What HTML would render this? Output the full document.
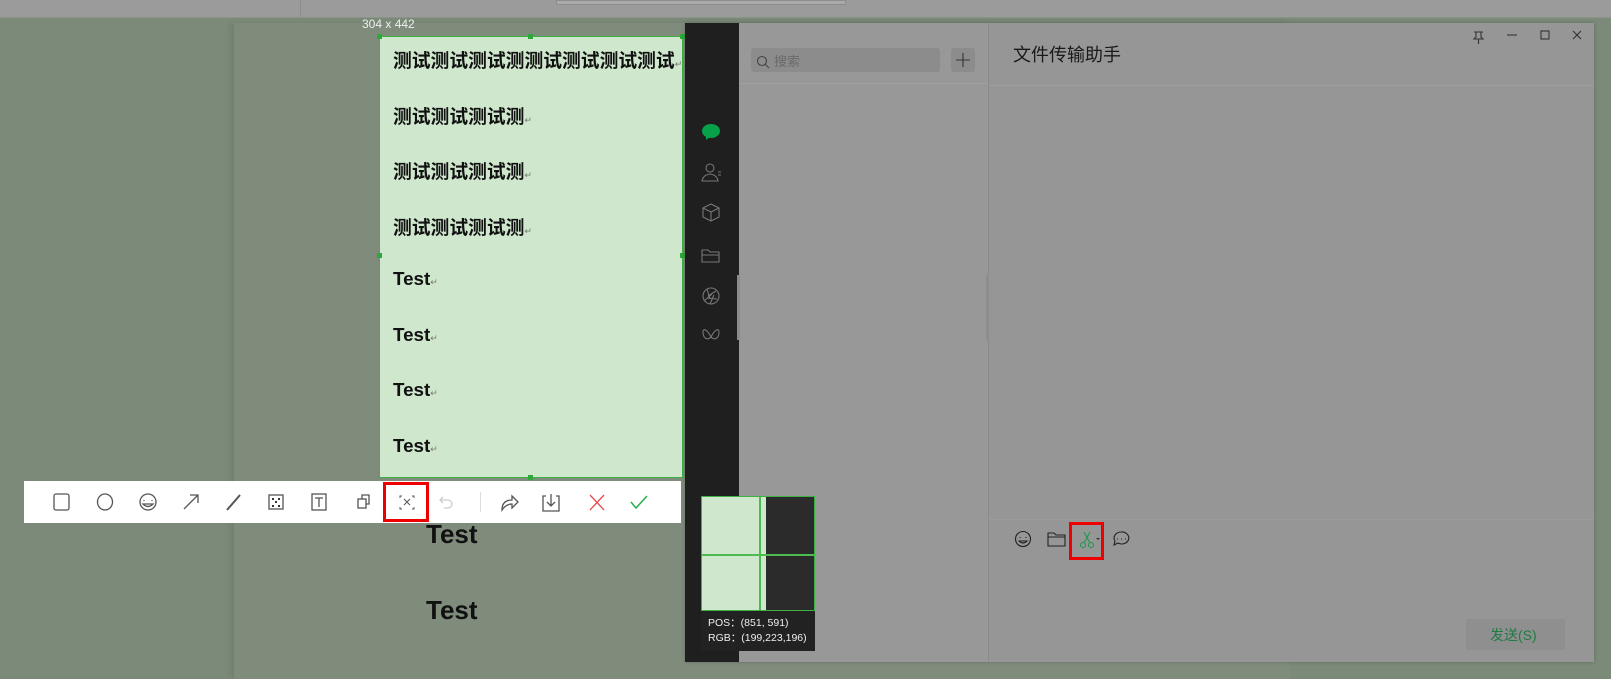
<!DOCTYPE html>
<html><head><meta charset="utf-8"><style>
*{margin:0;padding:0;box-sizing:border-box}
body{width:1611px;height:679px;overflow:hidden;background:#7b8a79;position:relative;font-family:"Liberation Sans","Noto Sans CJK SC",sans-serif}
.a{position:absolute}
svg{position:absolute;overflow:visible}
.zh{font-family:"Liberation Sans","Noto Sans CJK SC",sans-serif}
.row{position:absolute;left:393px;font-weight:bold;font-size:18.8px;color:#111;white-space:nowrap}
.ret{font-size:9px;color:#777;font-weight:normal}
</style></head><body>
<div class="a" style="left:0;top:0;width:1611px;height:18px;background:#9b9b9b;border-bottom:1px solid #8a9487"></div>
<div class="a" style="left:300px;top:0;width:1px;height:17px;background:#8d8d8d"></div>
<div class="a" style="left:556px;top:0;width:290px;height:5px;background:#aaa;border:1px solid #8d8d8d"></div>
<div class="a" style="left:234px;top:23px;width:1056px;height:656px;background:#7f8c7c;box-shadow:-4px 0 6px rgba(0,0,0,.08)"></div>

<!-- selection -->
<div class="a" style="left:362px;top:17px;font-size:12px;color:#eee">304 x 442</div>
<div class="a" style="left:379px;top:36px;width:304px;height:442px;background:#cfe7cc;border:1px solid #3cb043"></div>
<div class="a" style="left:377px;top:34px;width:5px;height:5px;background:#2ea83a"></div>
<div class="a" style="left:528px;top:34px;width:5px;height:5px;background:#2ea83a"></div>
<div class="a" style="left:680px;top:34px;width:5px;height:5px;background:#2ea83a"></div>
<div class="a" style="left:377px;top:253px;width:5px;height:5px;background:#2ea83a"></div>
<div class="a" style="left:680px;top:253px;width:5px;height:5px;background:#2ea83a"></div>
<div class="a" style="left:528px;top:475px;width:5px;height:5px;background:#2ea83a"></div>
<div class="row" style="top:46px">测试测试测试测测试测试测试测试<span class="ret">↵</span></div>
<div class="row" style="top:102px">测试测试测试测<span class="ret">↵</span></div>
<div class="row" style="top:157px">测试测试测试测<span class="ret">↵</span></div>
<div class="row" style="top:213px">测试测试测试测<span class="ret">↵</span></div>
<div class="row" style="top:268px">Test<span class="ret">↵</span></div>
<div class="row" style="top:324px">Test<span class="ret">↵</span></div>
<div class="row" style="top:379px">Test<span class="ret">↵</span></div>
<div class="row" style="top:435px">Test<span class="ret">↵</span></div>
<div class="a" style="left:426px;top:519px;font-size:26px;font-weight:bold;color:#111">Test</div>
<div class="a" style="left:426px;top:595px;font-size:26px;font-weight:bold;color:#111">Test</div>

<!-- toolbar -->
<div class="a" style="left:24px;top:481px;width:657px;height:42px;background:#fff"></div>
<div class="a" style="left:383px;top:482px;width:46px;height:40px;border:3px solid #e00"></div>
<div class="a" style="left:480px;top:492px;width:1px;height:20px;background:#ddd"></div>
<svg width="1611" height="679" style="left:0;top:0" fill="none" stroke="#555" stroke-width="1.3">
<rect x="54" y="494" width="15" height="16" rx="2"/>
<ellipse cx="105" cy="502" rx="7.5" ry="8"/>
<circle cx="148" cy="502" r="8"/><path d="M144 500v1M152 500v1M143 504q5 5 10 0z"/>
<path d="M184 509l14-14M190 495h8v8"/>
<path d="M227 510l13-15" stroke-width="2"/>
<rect x="269" y="495" width="14" height="14"/><path d="M272 498h2v2h-2zM278 498h2v2h-2zM275 501h2v2h-2zM272 505h2v2h-2zM278 505h2v2h-2z" fill="#333" stroke="none"/>
<rect x="312" y="494" width="14" height="16"/><path d="M315 498h8M319 498v9"/>
<rect x="358" y="499" width="8" height="9"/><path d="M362 499v-4h7v9h-3"/>
<path d="M400 498v-2h2M412 496h2v2M400 507v2h2M412 509h2v-2M404 499l6 6M410 499l-6 6" stroke-width="1"/>
<path d="M443 497l-3 3 3 3M440 500h8a4 4 0 0 1 0 8h-4" stroke="#ccc"/>
<path d="M502 510q0-10 10-10v-4l6 6-6 6v-4q-6 0-10 6z"/>
<path d="M546 496h-3v15h16v-15h-3M551 494v12M547 502l4 4 4-4"/>
<path d="M590 495l14 15M604 495l-14 15" stroke="#e84a4a"/>
<path d="M631 502l5 6 11-12" stroke="#22b14c" stroke-width="1.5"/>
</svg>

<!-- wechat window -->
<div class="a" style="left:685px;top:23px;width:909px;height:639px;background:#969696;box-shadow:0 0 4px rgba(0,0,0,.2)"></div>
<div class="a" style="left:685px;top:23px;width:54px;height:639px;background:#1f1f1f"></div>
<div class="a" style="left:739px;top:23px;width:249px;height:639px;background:#989898"></div>
<div class="a" style="left:739px;top:83px;width:249px;height:1px;background:#a0a0a0"></div>
<div class="a" style="left:737px;top:275px;width:3px;height:65px;background:#8a8a8a"></div>
<div class="a" style="left:988px;top:23px;width:1px;height:639px;background:#8a8a8a"></div>
<div class="a" style="left:986px;top:275px;width:3px;height:65px;background:#8d8d8d"></div>
<div class="a" style="left:751px;top:48px;width:189px;height:24px;background:#8c8c8c;border-radius:3px"></div>
<div class="a zh" style="left:774px;top:51px;font-size:13px;color:#6a6a6a">搜索</div>
<div class="a" style="left:951px;top:48px;width:24px;height:24px;background:#8c8c8c;border-radius:3px"></div>
<div class="a zh" style="left:1013px;top:41px;font-size:18px;color:#1a1a1a">文件传输助手</div>
<div class="a" style="left:989px;top:85px;width:605px;height:1px;background:#9e9e9e"></div>
<div class="a" style="left:989px;top:519px;width:605px;height:1px;background:#9c9c9c"></div>
<div class="a" style="left:1466px;top:619px;width:99px;height:31px;background:#8f8f8f;border-radius:2px"></div>
<div class="a zh" style="left:1490px;top:625px;font-size:14px;color:#1e7b44">发送(S)</div>
<div class="a" style="left:1069px;top:522px;width:35px;height:38px;border:3px solid #e00"></div>
<svg width="1611" height="679" style="left:0;top:0" fill="none" stroke="#222" stroke-width="1.1">
<circle cx="762" cy="61" r="4.5" stroke="#444"/><path d="M765 64l4 4" stroke="#444"/>
<path d="M963 53v14M956 60h14" stroke="#333"/>
<path d="M1474 32h9M1476 32v5l-2 2h9l-2-2v-5M1478.5 39v5" stroke="#333"/>
<path d="M1507 35h10" stroke="#333"/>
<rect x="1541" y="31" width="8" height="8" stroke="#333"/>
<path d="M1573 31l8 8M1581 31l-8 8" stroke="#333"/>
<ellipse cx="711" cy="131" rx="9" ry="7" fill="#07a14a" stroke="none"/><path d="M706 136l0 4 4-3z" fill="#07a14a" stroke="none"/>
<g stroke="#777"><circle cx="710" cy="168" r="4"/><path d="M702 181q1-6 8-7q7 1 8 7zM718 172h3M718 175h3"/>
<path d="M711 204l8 4v9l-8 4-8-4v-9zM703 208l8 4 8-4M711 212v9"/>
<path d="M702 250h6l2 2h9v10h-17zM702 255h17"/>
<circle cx="711" cy="296" r="8"/><path d="M707 289l3 10M716 291l-8 5M717 299l-9-1M710 304l4-9M704 301l8-7"/>
<path d="M711 337c-4-8-8-9-8-5 0 6 4 9 8 5c4 4 8 1 8-5 0-4-4-3-8 5z"/></g>
<g stroke="#222"><circle cx="1023" cy="539" r="7.5"/><path d="M1020 537v1M1026 537v1M1019 541q4 4 8 0z"/>
<path d="M1048 533h6l2 2h9v11h-17zM1048 537h17"/></g>
<g stroke="#1c9a4e"><circle cx="1083" cy="545" r="2.5"/><circle cx="1091" cy="545" r="2.5"/><path d="M1084 543l6-11M1090 543l-6-11"/></g>
<path d="M1096 538l2 2 2-2z" fill="#333" stroke="none"/>
<path d="M1121 532a7 6 0 1 1 -3 11l-4 2 1-4a7 6 0 0 1 6-9zM1117 539h1M1121 539h1M1125 539h1" stroke="#222"/>
</svg>

<!-- magnifier -->
<div class="a" style="left:701px;top:496px;width:114px;height:115px;background:#2b2b2b;border:1px solid #3cb043;overflow:hidden">
<div class="a" style="left:0;top:0;width:64px;height:115px;background:#cfe7cc"></div>
<div class="a" style="left:57px;top:0;width:2px;height:115px;background:#4cbb50"></div>
<div class="a" style="left:0;top:57px;width:114px;height:2px;background:#4cbb50"></div>
</div>
<div class="a" style="left:701px;top:611px;width:114px;height:40px;background:#222;color:#eee;font-size:10.5px;line-height:15px;padding:5px 0 0 7px;white-space:nowrap">POS：(851, 591)<br>RGB：(199,223,196)</div>
</body></html>
